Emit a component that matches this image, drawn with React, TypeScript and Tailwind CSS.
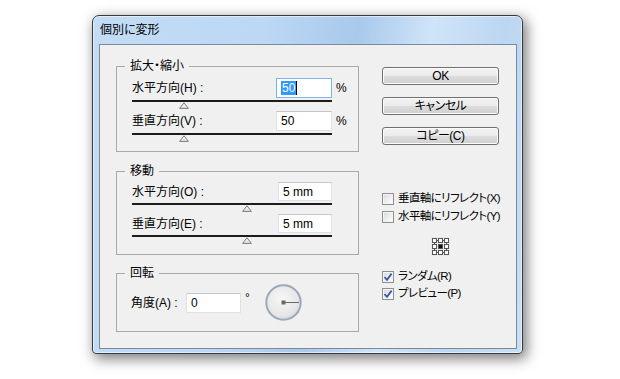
import React from 'react';

const font = "font-['Liberation_Sans','Noto_Sans_CJK_JP',sans-serif] [font-feature-settings:'palt']";

function Slider({ thumbClass }: { thumbClass: string }) {
  return (
    <div className="mt-[2px] w-[200px]">
      <div className="h-[2px] bg-[#1c1c1c]" />
      <svg className={`block ${thumbClass}`} width="10" height="7" viewBox="0 0 10 7">
        <defs>
          <linearGradient id="thumb" x1="0" y1="0" x2="0" y2="1">
            <stop offset="0" stopColor="#ffffff" />
            <stop offset="1" stopColor="#dcdcdc" />
          </linearGradient>
        </defs>
        <polygon points="5,0.8 9.4,6.4 0.6,6.4" fill="url(#thumb)" stroke="#7d7d7d" strokeWidth="1" />
      </svg>
    </div>
  );
}

function TextBox({ value, widthClass, heightClass, focused }: { value: string; widthClass: string; heightClass: string; focused?: boolean }) {
  return (
    <div
      className={`${widthClass} ${heightClass} flex items-center bg-white pl-[4px] text-[12px] leading-none border ${
        focused ? 'border-[#7eb4ea]' : 'border-[#dde2e8] border-t-[#c2c7ce]'
      }`}
    >
      {focused ? (
        <>
          <span className="bg-[#3399ff] text-white px-[1px] py-[1px]">{value}</span>
          <span className="w-[1px] h-[14px] bg-black" />
        </>
      ) : (
        <span className="text-black">{value}</span>
      )}
    </div>
  );
}

function GroupBox({ title, className, children }: { title: string; className: string; children: React.ReactNode }) {
  return (
    <div className={`relative w-[243px] border border-[#a9a9a9] ${className}`}>
      <span className="absolute left-[8px] top-[-8px] bg-[#f0f0f0] px-[5px] text-[12px] leading-[14px] text-black">
        {title}
      </span>
      {children}
    </div>
  );
}

function Button({ label }: { label: string }) {
  return (
    <button className="w-[117px] h-[18px] flex items-center justify-center rounded-[3px] border border-[#707070] bg-[linear-gradient(#f3f3f3_0%,#ebebeb_48%,#dddddd_52%,#cfcfcf_100%)] shadow-[inset_0_0_0_1px_#fbfbfb] text-[12px] leading-none tracking-[-0.5px] text-black">
      {label}
    </button>
  );
}

function CheckBox({ label, checked, rowClass }: { label: string; checked?: boolean; rowClass: string }) {
  return (
    <div className={`flex items-center whitespace-nowrap ${rowClass}`}>
      <div className="shrink-0 w-[12px] h-[12px] border border-[#8e8f8f] bg-[linear-gradient(135deg,#d6d6d6_0%,#f2f2f2_60%,#ffffff_100%)] flex items-center justify-center shadow-[inset_0_0_0_1px_#f4f4f4]">
        {checked && (
          <svg width="10" height="10" viewBox="0 0 10 10">
            <path d="M1.5 5.2 L4 7.8 L8.6 1.6" fill="none" stroke="#3b5aa0" strokeWidth="1.8" />
          </svg>
        )}
      </div>
      <span className="ml-[4px] text-[11.5px] leading-none tracking-[-0.6px] text-black">{label}</span>
    </div>
  );
}

function RefPoint() {
  const pts = [1, 7, 13];
  return (
    <svg width="19" height="19" viewBox="0 0 19 19" className="self-center mt-[11px]">
      <rect x="0" y="0" width="19" height="19" fill="#e4e4e4" opacity="0.6" />
      <path d="M3.5 3.5 H15.5 V15.5 H3.5 Z" fill="none" stroke="#555" strokeWidth="1" />
      {pts.map((y) =>
        pts.map((x) => (
          <rect
            key={`${x}-${y}`}
            x={x + 0.5}
            y={y + 0.5}
            width="4"
            height="4"
            fill={x === 7 && y === 7 ? '#111' : '#fff'}
            stroke="#555"
            strokeWidth="1"
          />
        ))
      )}
    </svg>
  );
}

function Dial() {
  return (
    <svg width="37" height="37" viewBox="0 0 37 37">
      <defs>
        <radialGradient id="dial" cx="0.45" cy="0.4" r="0.65">
          <stop offset="0" stopColor="#f7f7f7" />
          <stop offset="0.75" stopColor="#e6e6e6" />
          <stop offset="1" stopColor="#cfcfcf" />
        </radialGradient>
      </defs>
      <circle cx="18.5" cy="18.5" r="17.2" fill="url(#dial)" stroke="#9ea8bd" strokeWidth="2" />
      <line x1="18.5" y1="18.5" x2="34" y2="18.5" stroke="#6a6a6a" strokeWidth="1" />
      <rect x="16.5" y="16.5" width="4" height="4" fill="#6a6a6a" />
    </svg>
  );
}

export default function App() {
  return (
    <div className={`w-[620px] h-[379px] overflow-hidden bg-white pt-[15px] pl-[92px] ${font}`}>
      <div className="w-[431px] h-[339px] flex flex-col rounded-t-[7px] rounded-b-[4px] border border-[#363b42] bg-[linear-gradient(100deg,#c3dcf5_0%,#bcd8f4_35%,#a9c9eb_55%,#cfe4f8_70%,#bcd6f1_85%,#c8dff5_100%)] shadow-[inset_0_0_0_1px_rgba(255,255,255,0.55),3px_4px_13px_1px_rgba(0,0,0,0.5)]">
        <div className="h-[28px] shrink-0 flex items-center pl-[7px] text-[12px] text-black">個別に変形</div>
        <div className="ml-[6px] w-[418px] h-[305px] flex border border-[#7b899b] bg-[#f0f0f0]">
          <div className="pl-[16px] pt-[21px] flex flex-col">
            <GroupBox title="拡大・縮小" className="pl-[15px] pt-[11px] pb-[9px]">
              <div className="flex items-center h-[20px]">
                <span className="flex-1 text-[12px] text-black">水平方向(H) :</span>
                <TextBox value="50" widthClass="w-[56px]" heightClass="h-[20px]" focused />
                <span className="w-[26px] pl-[4px] text-[12px] text-black">%</span>
              </div>
              <Slider thumbClass="ml-[47px]" />
              <div className="mt-[2px] flex items-center h-[20px]">
                <span className="flex-1 text-[12px] text-black">垂直方向(V) :</span>
                <TextBox value="50" widthClass="w-[56px]" heightClass="h-[20px]" />
                <span className="w-[26px] pl-[4px] text-[12px] text-black">%</span>
              </div>
              <Slider thumbClass="ml-[47px]" />
            </GroupBox>

            <GroupBox title="移動" className="mt-[19px] pl-[15px] pt-[10px] pb-[10px]">
              <div className="w-[200px] flex items-center h-[19px]">
                <span className="flex-1 text-[12px] text-black">水平方向(O) :</span>
                <TextBox value="5 mm" widthClass="w-[54px]" heightClass="h-[19px]" />
              </div>
              <Slider thumbClass="ml-[110px]" />
              <div className="mt-[2px] w-[200px] flex items-center h-[19px]">
                <span className="flex-1 text-[12px] text-black">垂直方向(E) :</span>
                <TextBox value="5 mm" widthClass="w-[54px]" heightClass="h-[19px]" />
              </div>
              <Slider thumbClass="ml-[110px]" />
            </GroupBox>

            <GroupBox title="回転" className="mt-[18px] pl-[14px] pt-[10px] pb-[10px]">
              <div className="flex items-center h-[37px]">
                <span className="w-[55px] text-[12px] text-black">角度(A) :</span>
                <TextBox value="0" widthClass="w-[55px]" heightClass="h-[20px]" />
                <span className="w-[24px] pl-[4px] mb-[10px] text-[12px] leading-none text-black">°</span>
                <Dial />
              </div>
            </GroupBox>
          </div>

          <div className="ml-[23px] pt-[22px] w-[117px] flex flex-col">
            <div className="flex flex-col gap-[12px]">
              <Button label="OK" />
              <Button label="キャンセル" />
              <Button label="コピー(C)" />
            </div>
            <CheckBox label="垂直軸にリフレクト(X)" rowClass="mt-[45px] h-[18px]" />
            <CheckBox label="水平軸にリフレクト(Y)" rowClass="h-[18px]" />
            <RefPoint />
            <CheckBox label="ランダム(R)" checked rowClass="mt-[12px] h-[17px]" />
            <CheckBox label="プレビュー(P)" checked rowClass="h-[17px]" />
          </div>
        </div>
      </div>
    </div>
  );
}
